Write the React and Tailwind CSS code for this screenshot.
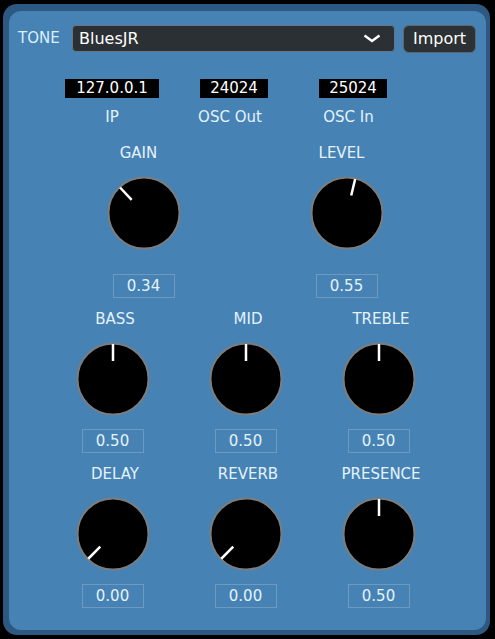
import React from "react";

const font = { fontFamily: '"DejaVu Sans", Verdana, sans-serif' };

const Knob = ({ value }) => {
  // 0 -> lower left, 1 -> lower right, sweep 270 degrees
  const a = ((-135 + value * 270) * Math.PI) / 180;
  const c = 37;
  const x1 = c + Math.sin(a) * 18;
  const y1 = c - Math.cos(a) * 18;
  const x2 = c + Math.sin(a) * 35;
  const y2 = c - Math.cos(a) * 35;
  return (
    <svg width="74" height="74" viewBox="0 0 74 74" className="block">
      <circle cx="37" cy="37" r="35.5" fill="#000" stroke="#7d7d7d" strokeWidth="2" />
      <line x1={x1} y1={y1} x2={x2} y2={y2} stroke="#fff" strokeWidth="2.5" />
    </svg>
  );
};

const KnobCol = ({ label, value, width, labelShift, bigGap }) => (
  <div className={`flex flex-col items-center ${width}`}>
    <div className={`h-5 leading-5 text-[15px] text-[#e4f2fc] ${labelShift}`}>{label}</div>
    <div className="mt-[13px]">
      <Knob value={value} />
    </div>
    <div
      className={`${bigGap ? "mt-[24px]" : "mt-[13px]"} w-[62px] h-6 border border-[#6e9ac2] flex items-center justify-center text-[15px] text-[#e4f2fc]`}
    >
      {value.toFixed(2)}
    </div>
  </div>
);

const Field = ({ value, label, width, boxW, labelShift }) => (
  <div className={`flex flex-col items-center ${width}`}>
    <div className={`${boxW} h-[19px] bg-black text-white text-[15px] leading-[19px] text-center`}>{value}</div>
    <div className={`mt-[9px] h-5 leading-5 text-[15px] text-[#e4f2fc] ${labelShift}`}>{label}</div>
  </div>
);

export default function App() {
  return (
    <div className="w-[495px] h-[639px] bg-black pt-[4px] pl-[3px]" style={font}>
      <div className="w-[487px] h-[631px] rounded-[14px] bg-[#2d5882] pt-[7px] pl-[6px]">
        <div className="w-[477px] h-[619px] rounded-[12px] bg-[#4682b4]">
          {/* header */}
          <div className="flex items-start pt-[14px] pl-[9px]">
            <div className="w-[54px] pt-[3px] text-[15px] leading-5 text-[#dcefff]">TONE</div>
            <div className="w-[323px] h-[27px] rounded-[4px] bg-[#2a3034] border border-[#667684] flex items-center justify-between pl-[6px] pr-[13px]">
              <span className="text-white text-[16px]">BluesJR</span>
              <svg width="18" height="9" viewBox="0 0 18 9">
                <polyline points="1.5,1.5 9,7 16.5,1.5" fill="none" stroke="#fff" strokeWidth="2.5" />
              </svg>
            </div>
            <button className="ml-[8px] w-[73px] h-[28px] rounded-[6px] bg-[#2b3135] border border-[#5a6670] text-white text-[16px] leading-none">
              Import
            </button>
          </div>

          {/* connection */}
          <div className="flex mt-[26px] pl-[42px]">
            <Field value="127.0.0.1" label="IP" width="w-[122px]" boxW="w-[94px]" labelShift="" />
            <Field value="24024" label="OSC Out" width="w-[122px]" boxW="w-[68px]" labelShift="pr-[8px]" />
            <Field value="25024" label="OSC In" width="w-[116px]" boxW="w-[68px]" labelShift="pr-[9px]" />
          </div>

          {/* knobs */}
          <div className="flex mt-[16px] pl-[33px]">
            <KnobCol label="GAIN" value={0.34} width="w-[203px]" labelShift="pr-[10px]" bigGap />
            <KnobCol label="LEVEL" value={0.55} width="w-[203px]" labelShift="pr-[10px]" bigGap />
          </div>
          <div className="flex mt-[11px] pl-[37px]">
            <KnobCol label="BASS" value={0.5} width="w-[133px]" labelShift="pl-[5px]" />
            <KnobCol label="MID" value={0.5} width="w-[133px]" labelShift="pl-[5px]" />
            <KnobCol label="TREBLE" value={0.5} width="w-[133px]" labelShift="pl-[5px]" />
          </div>
          <div className="flex mt-[11px] pl-[37px]">
            <KnobCol label="DELAY" value={0} width="w-[133px]" labelShift="pl-[5px]" />
            <KnobCol label="REVERB" value={0} width="w-[133px]" labelShift="pl-[5px]" />
            <KnobCol label="PRESENCE" value={0.5} width="w-[133px]" labelShift="pl-[5px]" />
          </div>
        </div>
      </div>
    </div>
  );
}
